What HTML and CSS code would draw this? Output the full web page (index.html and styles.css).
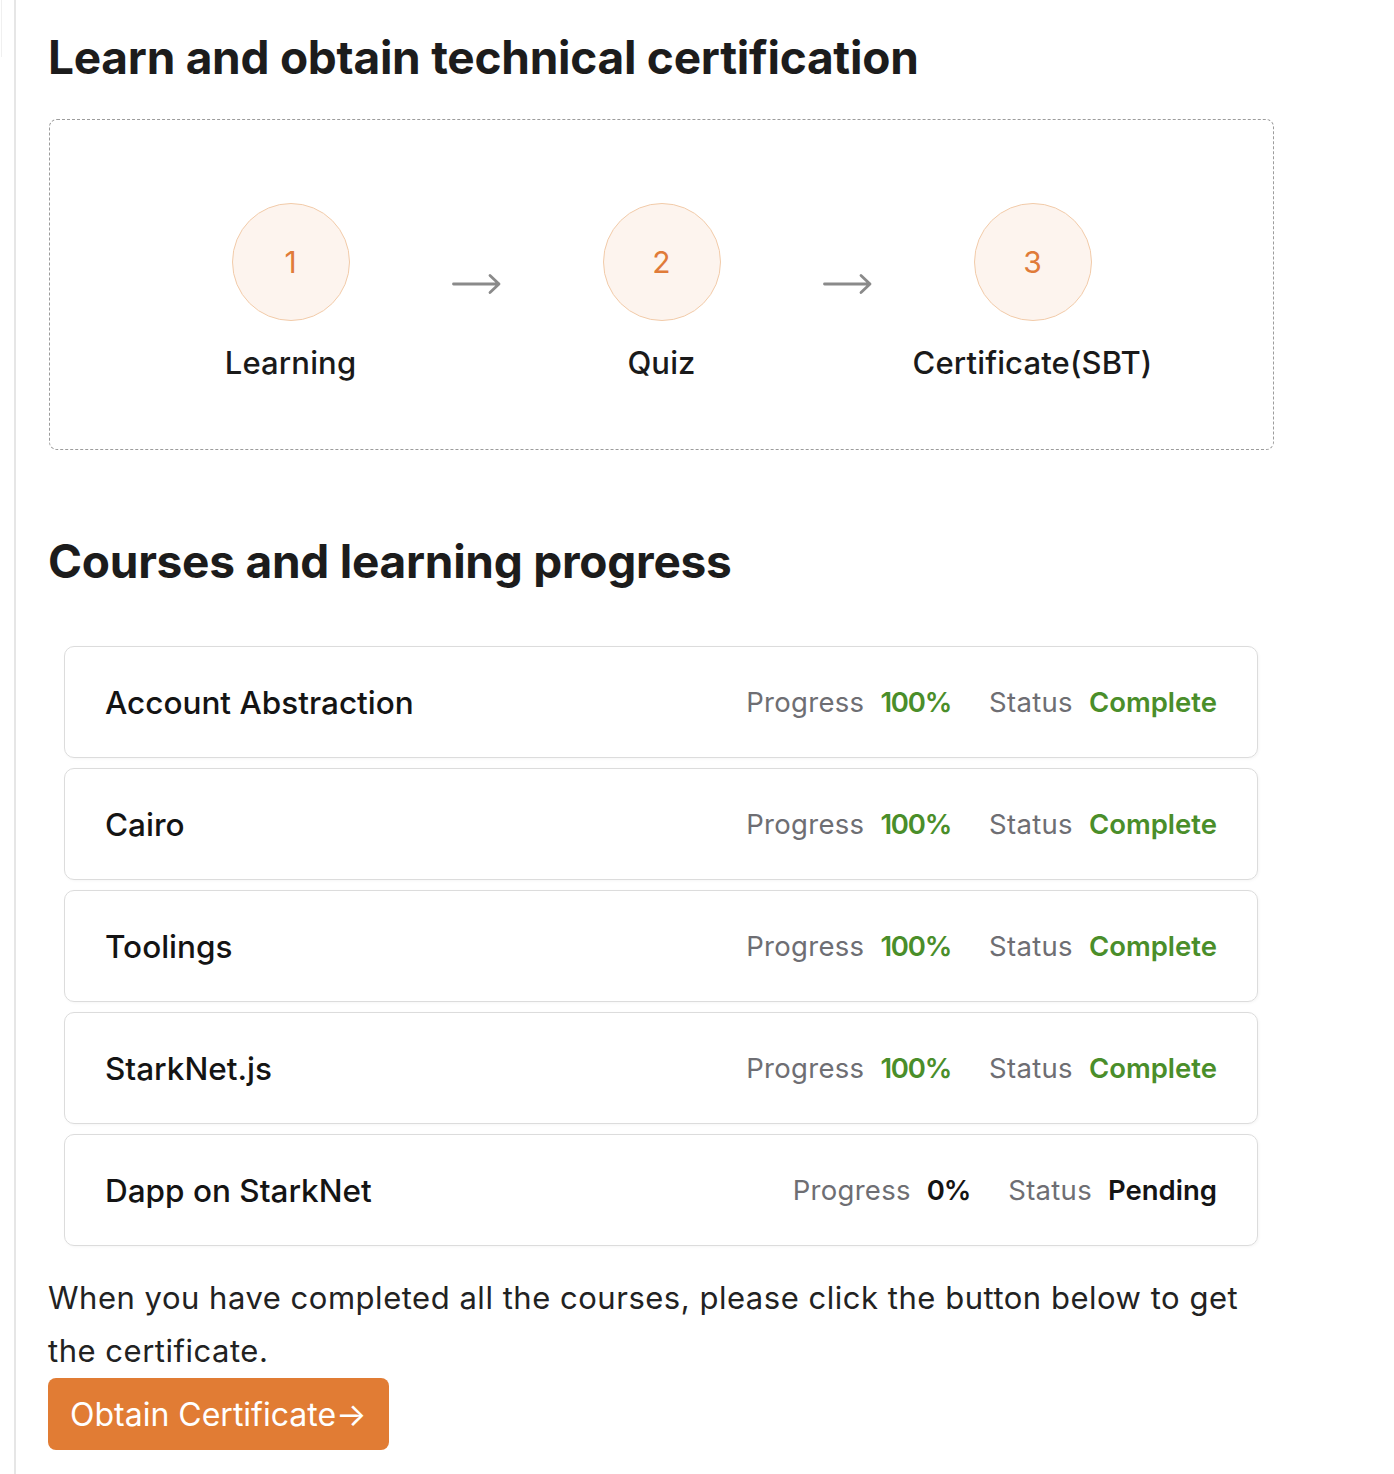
FILE: index.html
```html
<!DOCTYPE html>
<html>
<head>
<meta charset="utf-8">
<link rel="stylesheet" href="styles.css">
</head>
<body>
<div class="page">
  <div class="edge"><div class="edge-stub"></div></div>
  <main class="content">
    <h1 class="title">Learn and obtain technical certification</h1>
    <section class="steps">
      <div class="step">
        <div class="circle">1</div>
        <div class="step-label">Learning</div>
      </div>
      <div class="arrow"><svg width="50" height="24" viewBox="0 0 50 24"><path d="M1.5 12 H47 M38 3.5 L47 12 L38 20.5" fill="none" stroke="#8a8a8a" stroke-width="2.8" stroke-linecap="round" stroke-linejoin="round"/></svg></div>
      <div class="step">
        <div class="circle">2</div>
        <div class="step-label">Quiz</div>
      </div>
      <div class="arrow"><svg width="50" height="24" viewBox="0 0 50 24"><path d="M1.5 12 H47 M38 3.5 L47 12 L38 20.5" fill="none" stroke="#8a8a8a" stroke-width="2.8" stroke-linecap="round" stroke-linejoin="round"/></svg></div>
      <div class="step">
        <div class="circle">3</div>
        <div class="step-label">Certificate(SBT)</div>
      </div>
    </section>

    <h2 class="title title2">Courses and learning progress</h2>
    <ul class="courses">
      <li class="course">
        <span class="course-name">Account Abstraction</span>
        <span class="meta">
          <span class="label">Progress</span><span class="val ok num">100%</span>
          <span class="label status">Status</span><span class="val ok">Complete</span>
        </span>
      </li>
      <li class="course">
        <span class="course-name">Cairo</span>
        <span class="meta">
          <span class="label">Progress</span><span class="val ok num">100%</span>
          <span class="label status">Status</span><span class="val ok">Complete</span>
        </span>
      </li>
      <li class="course">
        <span class="course-name">Toolings</span>
        <span class="meta">
          <span class="label">Progress</span><span class="val ok num">100%</span>
          <span class="label status">Status</span><span class="val ok">Complete</span>
        </span>
      </li>
      <li class="course">
        <span class="course-name">StarkNet.js</span>
        <span class="meta">
          <span class="label">Progress</span><span class="val ok num">100%</span>
          <span class="label status">Status</span><span class="val ok">Complete</span>
        </span>
      </li>
      <li class="course">
        <span class="course-name">Dapp on StarkNet</span>
        <span class="meta">
          <span class="label">Progress</span><span class="val num">0%</span>
          <span class="label status">Status</span><span class="val">Pending</span>
        </span>
      </li>
    </ul>
    <p class="note">When you have completed all the courses, please click the button below to get the certificate.</p>
    <button class="btn">Obtain Certificate&rarr;</button>
  </main>
</div>
</body>
</html>
```
FILE: styles.css
```css
html, body {
  margin: 0;
  padding: 0;
  background: #fff;
}
body {
  font-family: Inter, "Noto Sans", sans-serif;
  color: #1a1a1a;
}
.page {
  display: flex;
  min-height: 1474px;
}
.edge {
  width: 14px;
  flex: none;
  border-right: 2px solid #e6e6e6;
}
.edge-stub {
  width: 1px;
  height: 57px;
  border-right: 1px solid #f0f0f0;
}
.content {
  padding-left: 32px;
  width: 1226px;
}
.title {
  margin: 0;
  padding-top: 30px;
  font-size: 46px;
  font-weight: 700;
  line-height: 54px;
  color: #1c1c1c;
  letter-spacing: -0.25px;
}
.steps {
  margin-top: 35px;
  margin-left: 1px;
  width: 1225px;
  height: 331px;
  border: 1px dashed #9c9c9c;
  border-radius: 8px;
  display: flex;
  justify-content: center;
  align-items: flex-start;
  padding-top: 83px;
  box-sizing: border-box;
}
.step {
  width: 250px;
  display: flex;
  flex-direction: column;
  align-items: center;
}
.circle {
  width: 116px;
  height: 116px;
  border-radius: 50%;
  border: 1.5px solid #f2cba9;
  background: #fdf4ee;
  color: #e07b39;
  font-size: 30px;
  display: flex;
  align-items: center;
  justify-content: center;
}
.step-label {
  margin-top: 22px;
  font-size: 31px;
  font-weight: 500;
  line-height: 40px;
  letter-spacing: 0.15px;
}
.arrow {
  width: 121px;
  display: flex;
  justify-content: center;
  margin-top: 69px;
}
.arrow svg {
  display: block;
  margin-left: 1px;
}
.title2 {
  padding-top: 84px;
}
.courses {
  list-style: none;
  margin: 58px 0 0 16px;
  padding: 0;
  width: 1194px;
  display: flex;
  flex-direction: column;
  gap: 10px;
}
.course {
  height: 112px;
  box-sizing: border-box;
  border: 1px solid #dcdcdc;
  border-radius: 10px;
  box-shadow: 1px 1px 3px rgba(0,0,0,0.04);
  display: flex;
  align-items: center;
  justify-content: space-between;
  padding: 0 40px 0 40px;
}
.course-name {
  font-size: 31.5px;
  font-weight: 500;
  color: #141414;
}
.meta {
  display: flex;
  align-items: baseline;
  font-size: 27.5px;
}
.label {
  color: #6e6e73;
  letter-spacing: 0.3px;
}
.label.status {
  margin-left: 38px;
}
.val {
  margin-left: 16px;
  font-weight: 600;
  color: #141414;
}
.val.num {
  letter-spacing: -1.2px;
}
.val.ok {
  color: #4a8e2a;
}
.note {
  margin: 25px 0 0;
  font-size: 31px;
  line-height: 53px;
  color: #222;
  letter-spacing: 0.52px;
  width: 1226px;
}
.btn {
  margin-top: 1px;
  display: block;
  background: #e17c34;
  color: #fff;
  border: none;
  border-radius: 8px;
  height: 72px;
  padding: 0 22px;
  font-family: Inter, "Noto Sans", sans-serif;
  font-size: 32px;
  font-weight: 400;
}
```
